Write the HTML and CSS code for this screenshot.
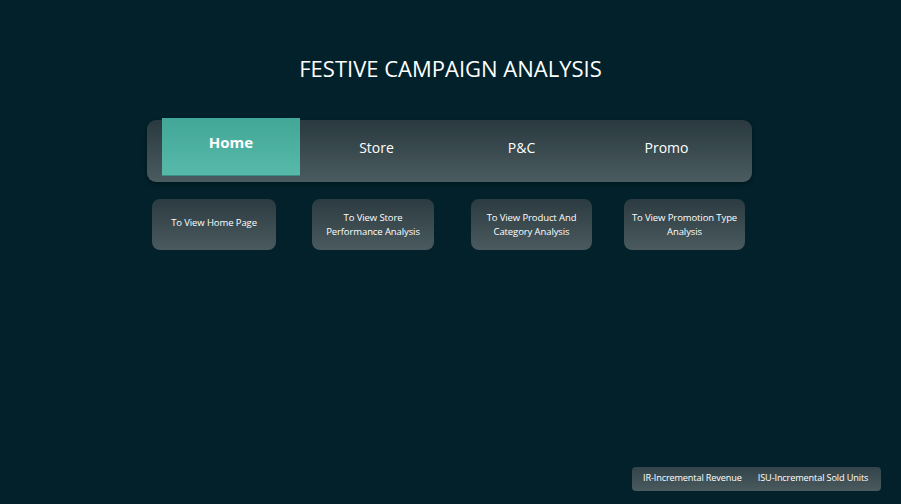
FILE: index.html
```html
<!DOCTYPE html>
<html>
<head>
<meta charset="utf-8">
<link rel="stylesheet" href="styles.css">
</head>
<body>
<div class="page">
  <h1 class="title">FESTIVE CAMPAIGN ANALYSIS</h1>
  <nav class="navbar">
    <div class="tab tab-active"><span class="active-box">Home</span></div>
    <div class="tab">Store</div>
    <div class="tab">P&amp;C</div>
    <div class="tab">Promo</div>
  </nav>
  <div class="buttons">
    <div class="btn btn-1">To View Home Page</div>
    <div class="btn btn-2">To View Store<br>Performance Analysis</div>
    <div class="btn btn-3">To View Product And<br>Category Analysis</div>
    <div class="btn btn-4">To View Promotion Type<br>Analysis</div>
  </div>
  <div class="legend">
    <span>IR-Incremental Revenue</span>
    <span>ISU-Incremental Sold Units</span>
  </div>
</div>
</body>
</html>
```
FILE: styles.css
```css
* { box-sizing: border-box; }
html, body {
  margin: 0;
  padding: 0;
  background: #02212a;
  font-family: "Open Sans", "Noto Sans", sans-serif;
  color: #ffffff;
}
.page {
  width: 901px;
  height: 504px;
  display: flex;
  flex-direction: column;
}
.title {
  margin: 54px 0 0 0;
  font-size: 22px;
  font-weight: 400;
  text-align: center;
  line-height: 28px;
  letter-spacing: 0;
}
.navbar {
  margin: 38px 0 0 147px;
  width: 605px;
  height: 62px;
  border-radius: 9px;
  background: linear-gradient(to bottom, #29393f, #4b5c60);
  display: flex;
  padding-left: 12px;
  box-shadow: 0 2px 4px rgba(0,0,0,0.3);
}
.tab {
  width: 145px;
  height: 62px;
  display: flex;
  align-items: center;
  justify-content: center;
  font-size: 14px;
  padding-bottom: 8px;
}
.tab-active { padding-bottom: 0; align-items: flex-start; width: 145px; justify-content: flex-start; padding-left: 3px; }
.active-box {
  margin-top: -2px;
  width: 138px;
  height: 58px;
  background: linear-gradient(to bottom, #43a797, #56b9a9);
  border-bottom: 1px solid #3d8f82;
  display: flex;
  justify-content: center;
  padding-top: 14px;
  font-weight: 700;
  font-size: 15px;
  line-height: 20px;
}
.buttons {
  display: flex;
  margin: 17px 0 0 152px;
}
.btn {
  height: 51px;
  border-radius: 8px;
  background: linear-gradient(to bottom, #2b3b41, #4a5a5e);
  display: flex;
  align-items: center;
  justify-content: center;
  text-align: center;
  font-size: 9.5px;
  line-height: 14px;
  letter-spacing: -0.1px;
}
.btn-1 { width: 124px; padding-bottom: 4px; }
.btn-2 { width: 122px; margin-left: 36px; }
.btn-3 { width: 121px; margin-left: 37px; }
.btn-4 { width: 121px; margin-left: 32px; }
.legend {
  margin-top: auto;
  margin-bottom: 13px;
  align-self: flex-end;
  margin-right: 20px;
  width: 249px;
  height: 24px;
  border-radius: 4px;
  background: linear-gradient(to bottom, #33444a, #4a5a5e);
  display: flex;
  align-items: center;
  padding-left: 11px;
  padding-bottom: 3px;
  gap: 16px;
  font-size: 9.2px;
  letter-spacing: -0.15px;
}
```
